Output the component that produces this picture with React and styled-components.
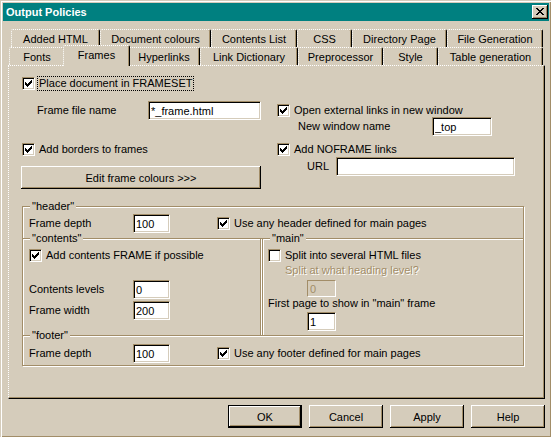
import React from "react";
import styled, { createGlobalStyle } from "styled-components";

const face = "#d5ccbb";
const shadow = "#a28d68";
const hilite = "#ffffff";

const GlobalStyle = createGlobalStyle`
  html, body {
    margin: 0;
    padding: 0;
    background: ${face};
    overflow: hidden;
  }
  body {
    font-family: "Liberation Sans", Arial, sans-serif;
    font-size: 11px;
    color: #000;
  }
`;

const Window = styled.div`
  width: 552px;
  height: 438px;
  box-sizing: border-box;
  padding: 3px;
  background: ${face};
  box-shadow: inset 1px 1px ${face}, inset 2px 2px ${hilite},
    inset -1px -1px #000, inset -2px -2px ${shadow};
  display: flex;
  flex-direction: column;
`;

const TitleBar = styled.div`
  height: 18px;
  background: #008080;
  color: #fff;
  font-weight: bold;
  display: flex;
  align-items: center;
  justify-content: space-between;
  padding: 0 1px 0 3px;
`;

const CloseButton = styled.div`
  width: 16px;
  height: 14px;
  box-sizing: border-box;
  background: ${face};
  box-shadow: inset -1px -1px #000, inset 1px 1px ${hilite},
    inset -2px -2px ${shadow}, inset 2px 2px ${face};
  display: flex;
  align-items: center;
  justify-content: center;
  padding: 0 1px 1px 0;
`;

const TabControl = styled.div`
  margin: 8px 4px 0 5px;
  display: flex;
  flex-direction: column;
`;

const TabRow = styled.div`
  display: flex;
  height: 18px;
  padding-left: ${(p) => p.$indent}px;
`;

const Tab = styled.div`
  box-sizing: border-box;
  width: ${(p) => (p.$active ? p.$w + 4 : p.$w)}px;
  height: ${(p) => (p.$active ? 21 : 18)}px;
  margin: ${(p) => (p.$active ? "-2px -2px 0" : "0")};
  position: ${(p) => (p.$active ? "relative" : "static")};
  z-index: ${(p) => (p.$active ? 1 : 0)};
  background: ${face};
  border-top: 1px dotted ${hilite};
  border-left: 1px dotted ${hilite};
  border-right: 1px solid #000;
  border-radius: 2px 2px 0 0;
  box-shadow: inset -1px 0 ${shadow};
  padding-top: 3px;
  line-height: 13px;
  text-align: center;
  white-space: nowrap;
`;

const Panel = styled.div`
  height: 334px;
  box-sizing: border-box;
  border-top: 1px dotted ${hilite};
  border-left: 1px dotted ${hilite};
  border-right: 1px solid #000;
  border-bottom: 1px solid #000;
  box-shadow: inset -1px -1px ${shadow};
  padding: 10px 0 0 12px;
`;

const TopGrid = styled.div`
  display: grid;
  grid-template-columns: 256px 1fr;
`;

const Column = styled.div`
  display: flex;
  flex-direction: column;
  align-items: flex-start;
`;

const CheckRow = styled.div`
  display: flex;
  align-items: center;
  height: 15px;
  gap: 4px;
  margin-top: ${(p) => p.$mt || 0}px;
  margin-left: ${(p) => p.$ml || 0}px;
  white-space: nowrap;
`;

const Box = styled.div`
  width: 13px;
  height: 13px;
  box-sizing: border-box;
  background: #fff;
  border: 1px solid;
  border-color: ${shadow} ${hilite} ${hilite} ${shadow};
  box-shadow: inset 1px 1px #000, inset -1px -1px ${face};
  display: flex;
  align-items: center;
  justify-content: center;
  flex: none;
`;

const CheckLabel = styled.span`
  line-height: 13px;
  ${(p) =>
    p.$focus &&
    `
    border: 1px dotted #000;
    padding: 0 1px;
    margin-left: -2px;
  `}
`;

const FieldRow = styled.div`
  display: flex;
  align-items: center;
  margin-top: ${(p) => p.$mt || 0}px;
  padding-left: ${(p) => p.$indent || 0}px;
  white-space: nowrap;
`;

const FieldLabel = styled.span`
  width: ${(p) => p.$w}px;
  flex: none;
  line-height: 13px;
  color: ${(p) => (p.$disabled ? shadow : "#000")};
  text-shadow: ${(p) => (p.$disabled ? `1px 1px 0 ${hilite}` : "none")};
`;

const TextBox = styled.input`
  width: ${(p) => p.$w}px;
  height: ${(p) => p.$h || 19}px;
  box-sizing: border-box;
  margin: 0 0 0 ${(p) => p.$ml || 0}px;
  padding: 0 2px;
  font: inherit;
  color: ${(p) => (p.disabled ? shadow : "#000")};
  background: ${(p) => (p.disabled ? face : "#fff")};
  border: 1px solid;
  border-color: ${shadow} ${hilite} ${hilite} ${shadow};
  box-shadow: ${(p) =>
    p.disabled ? "none" : `inset 1px 1px #000, inset -1px -1px ${face}`};
  outline: none;
  flex: none;
`;

const Button = styled.button`
  width: ${(p) => p.$w}px;
  height: 23px;
  box-sizing: border-box;
  margin-top: ${(p) => p.$mt || 0}px;
  padding: 0;
  font: inherit;
  color: #000;
  background: ${face};
  border: ${(p) => (p.$default ? "1px solid #000" : "none")};
  box-shadow: inset -1px -1px #000, inset 1px 1px ${hilite},
    inset -2px -2px ${shadow}, inset 2px 2px ${face};
  flex: none;
`;

const GroupGrid = styled.div`
  display: grid;
  grid-template-columns: 239px 262px;
  column-gap: 1px;
  margin: 17px 0 0 1px;
`;

const Group = styled.div`
  position: relative;
  grid-column: ${(p) => p.$col};
  margin-top: ${(p) => p.$mt || 0}px;
  padding: ${(p) => p.$pad};
  border: 1px solid ${shadow};
  box-shadow: 1px 1px 0 ${hilite}, inset 1px 1px 0 ${hilite};
  display: flex;
  flex-direction: column;
  align-items: flex-start;
`;

const Legend = styled.span`
  position: absolute;
  top: -7px;
  left: 7px;
  padding: 0 2px;
  line-height: 13px;
  background: ${face};
`;

const ButtonBar = styled.div`
  display: flex;
  justify-content: flex-end;
  gap: 7px;
  margin-top: 6px;
  padding-right: 4px;
`;

const CHECK = [
  "......#",
  ".....##",
  "#...###",
  "##.###.",
  "#####..",
  ".###...",
  "..#....",
];

const CROSS = [
  "##....##",
  ".##..##.",
  "..####..",
  "...##...",
  "..####..",
  ".##..##.",
  "##....##",
];

const Pixels = ({ rows }) => (
  <svg
    width={rows[0].length}
    height={rows.length}
    shapeRendering="crispEdges"
    style={{ display: "block" }}
  >
    {rows.map((r, y) =>
      r.split("").map((c, x) =>
        c === "#" ? <rect key={x + "-" + y} x={x} y={y} width="1" height="1" fill="#000" /> : null
      )
    )}
  </svg>
);

const Check = ({ checked, label, focus, mt, ml }) => (
  <CheckRow $mt={mt} $ml={ml}>
    <Box>{checked && <Pixels rows={CHECK} />}</Box>
    <CheckLabel $focus={focus}>{label}</CheckLabel>
  </CheckRow>
);

const backTabs = [
  ["Added HTML", 89],
  ["Document colours", 111],
  ["Contents List", 86],
  ["CSS", 55],
  ["Directory Page", 95],
  ["File Generation", 96],
];

const frontTabs = [
  ["Fonts", 56],
  ["Frames", 63],
  ["Hyperlinks", 72],
  ["Link Dictionary", 98],
  ["Preprocessor", 85],
  ["Style", 55],
  ["Table generation", 105],
];

export default function App() {
  return (
    <>
      <GlobalStyle />
      <Window>
        <TitleBar>
          <span>Output Policies</span>
          <CloseButton>
            <Pixels rows={CROSS} />
          </CloseButton>
        </TitleBar>

        <TabControl>
          <TabRow $indent={3}>
            {backTabs.map(([t, w]) => (
              <Tab key={t} $w={w}>
                {t}
              </Tab>
            ))}
          </TabRow>
          <TabRow $indent={1}>
            {frontTabs.map(([t, w]) => (
              <Tab key={t} $w={w} $active={t === "Frames"}>
                {t}
              </Tab>
            ))}
          </TabRow>

          <Panel>
            <TopGrid>
              <Column>
                <Check checked focus ml={1} label="Place document in FRAMESET" />
                <FieldRow $mt={10} $indent={16}>
                  <FieldLabel $w={111}>Frame file name</FieldLabel>
                  <TextBox $w={113} defaultValue="*_frame.html" />
                </FieldRow>
                <Check checked mt={22} ml={1} label="Add borders to frames" />
                <Button $w={240} $mt={9}>
                  Edit frame colours &gt;&gt;&gt;
                </Button>
              </Column>
              <Column>
                <Check checked mt={27} label="Open external links in new window" />
                <FieldRow $mt={-1} $indent={21}>
                  <FieldLabel $w={134}>New window name</FieldLabel>
                  <TextBox $w={60} defaultValue="_top" />
                </FieldRow>
                <Check checked mt={6} label="Add NOFRAME links" />
                <FieldRow $indent={30}>
                  <FieldLabel $w={29}>URL</FieldLabel>
                  <TextBox $w={179} defaultValue="" />
                </FieldRow>
              </Column>
            </TopGrid>

            <GroupGrid>
              <Group $col="1 / span 2" $pad="7px 0 5px 6px">
                <Legend>"header"</Legend>
                <FieldRow>
                  <FieldLabel $w={104}>Frame depth</FieldLabel>
                  <TextBox $w={37} defaultValue="100" />
                  <Check checked ml={47} label="Use any header defined for main pages" />
                </FieldRow>
              </Group>

              <Group $col="1" $mt={-1} $pad="9px 0 15px 6px">
                <Legend>"contents"</Legend>
                <Check checked label="Add contents FRAME if possible" />
                <FieldRow $mt={17}>
                  <FieldLabel $w={104}>Contents levels</FieldLabel>
                  <TextBox $w={37} defaultValue="0" />
                </FieldRow>
                <FieldRow $mt={2}>
                  <FieldLabel $w={104}>Frame width</FieldLabel>
                  <TextBox $w={37} defaultValue="200" />
                </FieldRow>
              </Group>

              <Group $col="2" $mt={-1} $pad="9px 0 4px 5px">
                <Legend>"main"</Legend>
                <Check label="Split into several HTML files" />
                <FieldRow $mt={1} $indent={17}>
                  <FieldLabel $w={200} $disabled>
                    Split at what heading level?
                  </FieldLabel>
                </FieldRow>
                <FieldRow $mt={3}>
                  <TextBox $w={29} $h={17} $ml={39} disabled defaultValue="0" />
                </FieldRow>
                <FieldRow>
                  <FieldLabel $w={240}>First page to show in "main" frame</FieldLabel>
                </FieldRow>
                <FieldRow $mt={2}>
                  <TextBox $w={29} $ml={39} defaultValue="1" />
                </FieldRow>
              </Group>

              <Group $col="1 / span 2" $mt={-1} $pad="8px 0 2px 6px">
                <Legend>"footer"</Legend>
                <FieldRow>
                  <FieldLabel $w={104}>Frame depth</FieldLabel>
                  <TextBox $w={37} defaultValue="100" />
                  <Check checked ml={47} label="Use any footer defined for main pages" />
                </FieldRow>
              </Group>
            </GroupGrid>
          </Panel>
        </TabControl>

        <ButtonBar>
          <Button $w={74} $default>
            OK
          </Button>
          <Button $w={74}>Cancel</Button>
          <Button $w={74}>Apply</Button>
          <Button $w={74}>Help</Button>
        </ButtonBar>
      </Window>
    </>
  );
}
